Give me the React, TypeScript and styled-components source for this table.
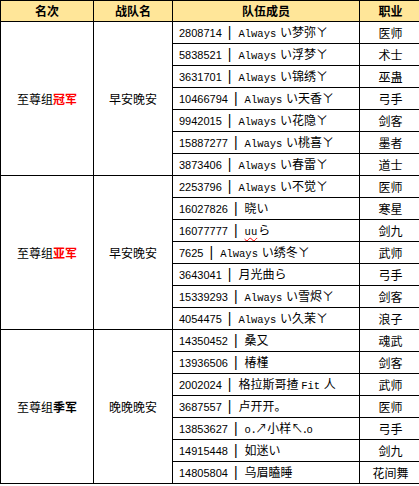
import styled, { createGlobalStyle, css } from "styled-components";

const GlobalStyle = createGlobalStyle`
  html, body {
    margin: 0;
    padding: 0;
    background: #fff;
  }
  body {
    font-family: "Liberation Sans", "Noto Sans CJK SC", sans-serif;
    font-size: 12px;
    color: #000;
  }
`;

const Table = styled.table`
  border-collapse: collapse;
  table-layout: fixed;
  width: 418px;
  border: 1px solid #000;
`;

const HeadRow = styled.tr`
  height: 21px;
  background: #ffe699;
`;

const Th = styled.th<{ $w: number }>`
  width: ${({ $w }) => $w}px;
  border: 1px solid #000;
  padding: 0;
  font-family: "Noto Sans CJK SC", sans-serif;
  font-size: 12px;
  font-weight: 700;
  line-height: 14px;
  text-align: center;
`;

const Row = styled.tr`
  height: 22px;
`;

const Cell = styled.td<{ $align?: "left" | "center" }>`
  border: 1px solid #000;
  padding: 0;
  line-height: 14px;
  white-space: nowrap;
  overflow: hidden;
  text-align: ${({ $align }) => $align ?? "center"};
  font-family: "Noto Sans CJK SC", sans-serif;
  font-size: 12px;
`;

const MemberCell = styled(Cell)`
  padding-left: 6px;
`;

const Rank = styled.span<{ $red?: boolean }>`
  font-weight: 700;
  ${({ $red }) =>
    $red &&
    css`
      color: #ff0000;
    `}
`;

const Id = styled.span`
  font-family: "Liberation Sans", sans-serif;
  font-size: 11px;
`;

const Sep = styled.span`
  display: inline-block;
  margin: 0 7px 0 6px;
  font-family: "Liberation Sans", sans-serif;
  font-size: 14px;
  line-height: 12px;
  color: #000;
`;

const Latin = styled.span`
  font-family: "Liberation Mono", monospace;
  font-size: 10.5px;
  margin-right: 1px;
`;

const Wavy = styled(Latin)`
  text-decoration: underline wavy #ff0000;
  text-decoration-thickness: 1px;
  text-underline-offset: 2px;
`;

type Member = { id: string; name: string; job: string; wavy?: boolean };
type Group = { prefix: string; rank: string; red: boolean; team: string; members: Member[] };

const groups: Group[] = [
  {
    prefix: "至尊组",
    rank: "冠军",
    red: true,
    team: "早安晚安",
    members: [
      { id: "2808714", name: "Always い梦弥ㄚ", job: "医师" },
      { id: "5838521", name: "Always い浮梦ㄚ", job: "术士" },
      { id: "3631701", name: "Always い锦绣ㄚ", job: "巫蛊" },
      { id: "10466794", name: "Always い天香ㄚ", job: "弓手" },
      { id: "9942015", name: "Always い花隐ㄚ", job: "剑客" },
      { id: "15887277", name: "Always い桃喜ㄚ", job: "墨者" },
      { id: "3873406", name: "Always い春雷ㄚ", job: "道士" },
    ],
  },
  {
    prefix: "至尊组",
    rank: "亚军",
    red: true,
    team: "早安晚安",
    members: [
      { id: "2253796", name: "Always い不觉ㄚ", job: "医师" },
      { id: "16027826", name: "晓い", job: "寒星" },
      { id: "16077777", name: "uuら", job: "剑九", wavy: true },
      { id: "7625", name: "Always い绣冬ㄚ", job: "武师" },
      { id: "3643041", name: "月光曲ら", job: "弓手" },
      { id: "15339293", name: "Always い雪烬ㄚ", job: "剑客" },
      { id: "4054475", name: "Always い久茉ㄚ", job: "浪子" },
    ],
  },
  {
    prefix: "至尊组",
    rank: "季军",
    red: false,
    team: "晚晚晚安",
    members: [
      { id: "14350452", name: "桑又", job: "魂武" },
      { id: "13936506", name: "椿槿", job: "剑客" },
      { id: "2002024", name: "格拉斯哥揸 Fit 人", job: "武师" },
      { id: "3687557", name: "卢开开。", job: "医师" },
      { id: "13853627", name: "o.↗小样↖.o", job: "弓手" },
      { id: "14915448", name: "如迷い", job: "剑九" },
      { id: "14805804", name: "乌眉瞌睡", job: "花间舞" },
    ],
  },
];

function Name({ text, wavy }: { text: string; wavy?: boolean }) {
  const parts = text.split(/([A-Za-z]+)/);
  return (
    <>
      {parts.map((p, i) =>
        /^[A-Za-z]+$/.test(p) ? (
          wavy ? <Wavy key={i}>{p}</Wavy> : <Latin key={i}>{p}</Latin>
        ) : (
          <span key={i}>{p}</span>
        )
      )}
    </>
  );
}

export default function App() {
  return (
    <>
      <GlobalStyle />
      <Table>
        <thead>
          <HeadRow>
            <Th $w={92}>名次</Th>
            <Th $w={78}>战队名</Th>
            <Th $w={186}>队伍成员</Th>
            <Th $w={61}>职业</Th>
          </HeadRow>
        </thead>
        <tbody>
          {groups.map((g) =>
            g.members.map((m, i) => (
              <Row key={g.rank + m.id}>
                {i === 0 && (
                  <>
                    <Cell rowSpan={g.members.length}>
                      {g.prefix}
                      <Rank $red={g.red}>{g.rank}</Rank>
                    </Cell>
                    <Cell rowSpan={g.members.length}>{g.team}</Cell>
                  </>
                )}
                <MemberCell $align="left">
                  <Id>{m.id}</Id>
                  <Sep>|</Sep>
                  <Name text={m.name} wavy={m.wavy} />
                </MemberCell>
                <Cell>{m.job}</Cell>
              </Row>
            ))
          )}
        </tbody>
      </Table>
    </>
  );
}
